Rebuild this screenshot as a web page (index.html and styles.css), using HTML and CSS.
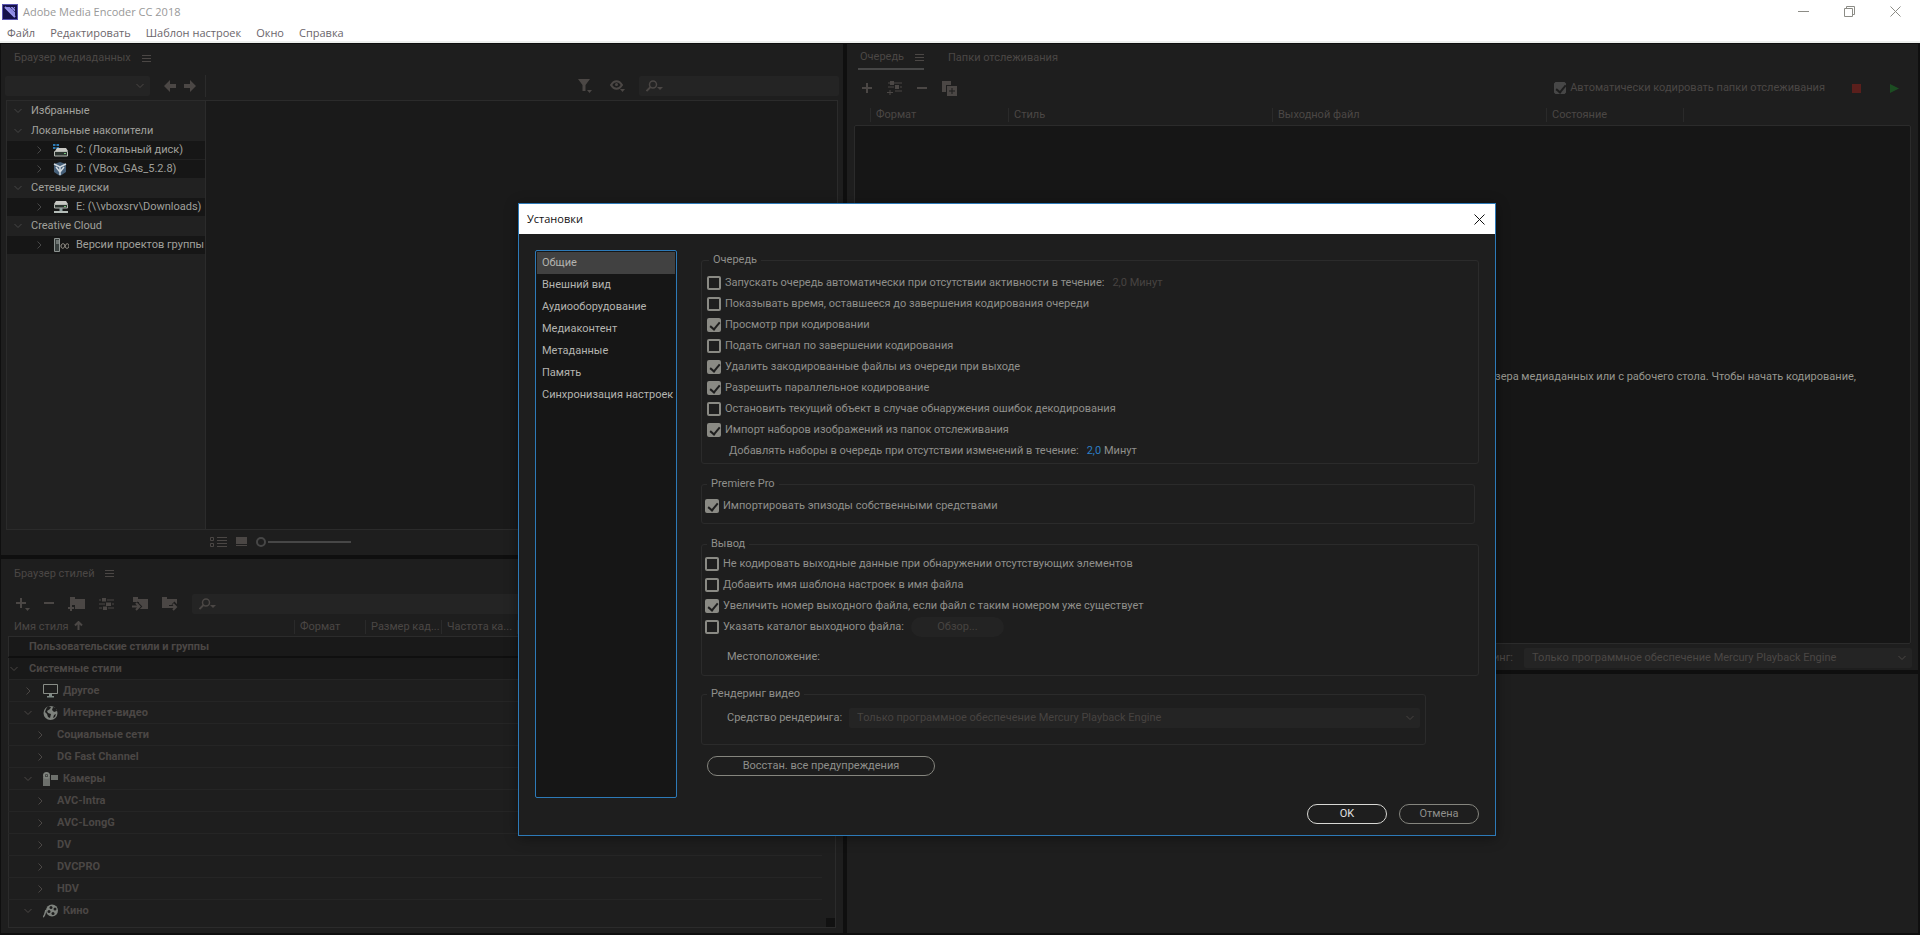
FILE: index.html
```html
<!DOCTYPE html>
<html lang="ru">

<head>
  <meta charset="UTF-8">
  <title>Adobe Media Encoder CC 2018</title>
  <link rel="stylesheet" href="styles.css">
</head>

<body>
  <svg class="sprite" aria-hidden="true">
    <symbol id="menu" viewBox="0 0 9 9"><path d="M0 1.500h9M0 4.500h9M0 7.500h9" stroke="currentColor" /></symbol>
    <symbol id="down" viewBox="0 0 8 8"><path d="M.5 2l3.500 3.500L7.500 2" fill="none" stroke="currentColor" /></symbol>
    <symbol id="right" viewBox="0 0 8 8"><path d="M2.500.5L6 4 2.500 7.500" fill="none" stroke="currentColor" /></symbol>
    <symbol id="close" viewBox="0 0 11 11"><path d="M.5.5l10 10M10.500.5l-10 10" fill="none" stroke="currentColor" /></symbol>
    <symbol id="arrow" viewBox="0 0 12 12"><path d="M0 6l6-6v4h6v4H6v4z" fill="currentColor" /></symbol>
    <symbol id="search" viewBox="0 0 18 12"><circle cx="7" cy="4.500" r="3.500" fill="none" stroke="currentColor" stroke-width="1.500" /><path d="M4.500 7L.5 11" stroke="currentColor" stroke-width="1.800" /><path d="M11 7h6l-3 3z" fill="currentColor" /></symbol>
    <symbol id="minus" viewBox="0 0 10 10"><path d="M0 5h10" stroke="currentColor" stroke-width="2" /></symbol>
    <symbol id="plus" viewBox="0 0 10 10"><path d="M0 5h10M5 0v10" stroke="currentColor" stroke-width="2" /></symbol>
    <symbol id="sliders" viewBox="0 0 15 12"><path d="M0 2h2M8 2h7M0 6h6M13 6h2M0 10h3M9 10h6" stroke="currentColor" /><path d="M3 0h4v3.500H3zM7 4.500h5V8H7zM4 8.500h4V12H4z" fill="currentColor" /></symbol>
  </svg>

  <header class="titlebar">
    <svg class="logo" viewBox="0 0 16 16">
      <rect x=".5" y=".5" width="15" height="15" fill="#16124a" stroke="#5a55b0" />
      <path d="M4 3h9v9z" fill="#8c88e0" />
      <path d="M3 3l10 10" stroke="#9a96ee" stroke-width="2" />
      <path d="M8 3l5 5M11 3l2 2" stroke="#16124a" stroke-dasharray="1 1" />
    </svg>
    <span>Adobe Media Encoder CC 2018</span>
    <div class="window-buttons">
      <button aria-label="Свернуть"><svg width="11" height="11" viewBox="0 0 11 11"><path d="M0 5.500h11" stroke="currentColor" /></svg></button>
      <button aria-label="Восстановить"><svg width="11" height="11" viewBox="0 0 11 11"><path d="M.5 2.500h8v8h-8zM2.500 2.500v-2h8v8h-2" fill="none" stroke="currentColor" /></svg></button>
      <button aria-label="Закрыть"><svg width="11" height="11"><use href="#close" /></svg></button>
    </div>
  </header>
  <nav class="menubar">
    <a href="#">Файл</a>
    <a href="#">Редактировать</a>
    <a href="#">Шаблон настроек</a>
    <a href="#">Окно</a>
    <a href="#">Справка</a>
  </nav>

  <main class="workspace">
    <div class="column column-left">
      <section class="panel media">
        <div class="tabs">
          <span>Браузер медиаданных</span>
          <svg width="9" height="9"><use href="#menu" /></svg>
        </div>
        <div class="media-bar">
          <div class="select path">
            <select aria-label="Путь"><option></option></select>
            <svg width="8" height="8"><use href="#down" /></svg>
          </div>
          <button class="back" aria-label="Назад"><svg width="12" height="12"><use href="#arrow" /></svg></button>
          <button class="forward" aria-label="Вперед"><svg width="12" height="12"><use href="#arrow" /></svg></button>
          <i class="separator"></i>
          <button class="filter" aria-label="Фильтр"><svg width="14" height="14" viewBox="0 0 14 14"><path d="M0 0h12L7.500 6v6h-3V6zM9 11h5l-2.500 3z" fill="currentColor" /></svg></button>
          <button class="eye" aria-label="Просмотр"><svg width="15" height="12" viewBox="0 0 15 12"><path d="M1 5c3-5 8-5 11 0-3 5-8 5-11 0z" fill="none" stroke="currentColor" stroke-width="2" /><circle cx="6.500" cy="4.500" r="1.500" fill="currentColor" /><path d="M10 9h5l-2.500 3z" fill="currentColor" /></svg></button>
          <label class="search">
            <svg width="18" height="12"><use href="#search" /></svg>
            <input type="text" aria-label="Поиск">
          </label>
        </div>
        <div class="media-body">
          <ul class="drives">
            <li class="group"><svg width="8" height="8"><use href="#down" /></svg>Избранные</li>
            <li class="group"><svg width="8" height="8"><use href="#down" /></svg>Локальные накопители</li>
            <li class="drive"><svg width="8" height="8"><use href="#right" /></svg>
              <svg class="drive-icon" viewBox="0 0 16 14"><path d="M0 1h2.500v2H0zM3.500 1H6v2H3.500zM0 4h2.500v2H0zM3.500 4H6v2H3.500z" fill="#2c7bb5" /><path d="M4 5h9l2 3H2z" fill="#c8c8c4" /><path d="M1.500 8.500h13V13h-13z" fill="#2b332f" stroke="#b4b8b2" /><path d="M11 10.500h2" stroke="#77c47b" /></svg>C: (Локальный диск)</li>
            <li class="drive"><svg width="8" height="8"><use href="#right" /></svg>
              <svg class="drive-icon" viewBox="0 0 16 14"><path d="M1 2l6-2 6 2v8l-6 4-6-4z" fill="#46607a" /><path d="M1 2l6 3 6-3M7 5v8M3 5l4 5 4-5" fill="none" stroke="#d3dae0" stroke-width="1.500" /></svg>D: (VBox_GAs_5.2.8)</li>
            <li class="group"><svg width="8" height="8"><use href="#down" /></svg>Сетевые диски</li>
            <li class="drive"><svg width="8" height="8"><use href="#right" /></svg>
              <svg class="drive-icon" viewBox="0 0 16 14"><path d="M3 1h10l2 3H1z" fill="#c8c8c4" /><path d="M1.500 4.500h13V8h-13z" fill="#2b332f" stroke="#b4b8b2" /><path d="M11 6.500h2" stroke="#77c47b" /><path d="M8 8v4" stroke="#8fa0a0" stroke-width="3" /><path d="M1 12h14" stroke="#b4bcb8" stroke-width="2" /></svg>E: (\\vboxsrv\Downloads)</li>
            <li class="group"><svg width="8" height="8"><use href="#down" /></svg>Creative Cloud</li>
            <li class="drive"><svg width="8" height="8"><use href="#right" /></svg>
              <svg class="drive-icon" viewBox="0 0 16 14"><path d="M1.500.5h5v13h-5z" fill="#39403f" stroke="#8d9391" /><path d="M3 3h3M3 5h3" stroke="#a8aeac" /><path d="M8 8c0-3 4-3 4 0s4 3 4 0-3-3-4 0-4 3-4 0z" fill="none" stroke="#9a958c" /></svg>Версии проектов группы</li>
          </ul>
        </div>
        <div class="media-foot">
          <svg width="17" height="12" viewBox="0 0 17 12"><path d="M.5 1.500h3v3h-3zM.5 7.500h3v3h-3zM7 1.500h10M7 4.500h10M7 7.500h10M7 10.500h10" fill="none" stroke="currentColor" /></svg>
          <svg width="11" height="12" viewBox="0 0 11 12"><path d="M0 1h11v7H0zM0 9h11v1H0z" fill="currentColor" /></svg>
          <input type="range" min="0" max="100" value="0" aria-label="Масштаб">
        </div>
      </section>

      <section class="panel presets">
        <div class="tabs">
          <span>Браузер стилей</span>
          <svg width="9" height="9"><use href="#menu" /></svg>
        </div>
        <div class="presets-bar">
          <button aria-label="Создать стиль"><svg width="14" height="14" viewBox="0 0 14 14"><path d="M0 6h10M5 1v10" stroke="currentColor" stroke-width="2" /><path d="M9 11h5l-2.500 3z" fill="currentColor" /></svg></button>
          <button aria-label="Удалить стиль"><svg width="10" height="14" viewBox="0 0 10 14"><path d="M0 6h10" stroke="currentColor" stroke-width="2" /></svg></button>
          <button aria-label="Создать группу"><svg width="17" height="14" viewBox="0 0 17 14"><path d="M2 0h5v2h10v10H7V8H2z" fill="currentColor" /><path d="M0 11h6M3 8v6" stroke="currentColor" stroke-width="2" /></svg></button>
          <button aria-label="Настройки стиля"><svg width="15" height="12"><use href="#sliders" /></svg></button>
          <button class="import" aria-label="Импорт"><svg width="16" height="14" viewBox="0 0 16 14"><path d="M1 0h5v2h10v10H7V5H1z" fill="currentColor" /><path d="M0 9.500h7M4 6l3.500 3.500L4 13" fill="none" stroke="#1e1e1e" stroke-width="4" /><path d="M0 9.500h7M4 6l3.500 3.500L4 13" fill="none" stroke="currentColor" stroke-width="2" /></svg></button>
          <button aria-label="Экспорт"><svg width="16" height="14" viewBox="0 0 16 14"><path d="M0 0h5v2h10v9H0z" fill="currentColor" /><path d="M7 10h7M11 6l4 4-4 4" fill="none" stroke="#1e1e1e" stroke-width="4" /><path d="M7 10h7M11 7l3 3-3 3" fill="none" stroke="currentColor" stroke-width="2" /></svg></button>
          <label class="search">
            <svg width="18" height="12"><use href="#search" /></svg>
            <input type="text" aria-label="Поиск стилей">
          </label>
        </div>
        <table class="presets-table">
          <colgroup><col class="c-name"><col class="c-format"><col class="c-size"><col class="c-rate"><col><col class="c-scroll"></colgroup>
          <thead>
            <tr>
              <th>Имя стиля <svg width="9" height="9" viewBox="0 0 9 9"><path d="M4.500 9V1M1 4.500L4.500 1 8 4.500" fill="none" stroke="currentColor" stroke-width="2" /></svg></th>
              <th><span>Формат</span></th>
              <th><span>Размер кад...</span></th>
              <th><span>Частота ка...</span></th>
              <th><span></span></th>
              <th></th>
            </tr>
          </thead>
          <tbody>
            <tr class="root first"><td colspan="5"><div class="lvl-0"><i></i>Пользовательские стили и группы</div></td><td></td></tr>
            <tr class="root"><td colspan="5"><div class="lvl-0"><svg width="8" height="8"><use href="#down" /></svg>Системные стили</div></td><td></td></tr>
            <tr><td colspan="5"><div class="lvl-1"><svg width="8" height="8"><use href="#right" /></svg>
              <svg class="kind" viewBox="0 0 15 14"><path d="M.5.5h14v9H.5z" fill="none" stroke="#898d87" /><path d="M6 10h3v2h2v1.500H4V12h2z" fill="#7f8a86" /></svg>Другое</div></td><td></td></tr>
            <tr><td colspan="5"><div class="lvl-1"><svg width="8" height="8"><use href="#down" /></svg>
              <svg class="kind" viewBox="0 0 15 14"><circle cx="7.500" cy="7" r="7" fill="#7e827d" /><path d="M5 0l3 1-1 2-3 2 1 2 3 1-1 4-2-1-1-3-2-2 1-3M10 1l-1 3 2 2 3-1-1-3zM11 9l2-1-1 3-2 1z" fill="#1e1e1e" /></svg>Интернет-видео</div></td><td></td></tr>
            <tr><td colspan="5"><div class="lvl-2"><svg width="8" height="8"><use href="#right" /></svg>Социальные сети</div></td><td></td></tr>
            <tr><td colspan="5"><div class="lvl-2"><svg width="8" height="8"><use href="#right" /></svg>DG Fast Channel</div></td><td></td></tr>
            <tr><td colspan="5"><div class="lvl-1"><svg width="8" height="8"><use href="#down" /></svg>
              <svg class="kind" viewBox="0 0 15 14"><path d="M0 5h7v9H0zM8 3h7v5H8z" fill="#6d706c" /><circle cx="3.500" cy="3.500" r="2.500" fill="#1e1e1e" stroke="#7e827d" stroke-width="2" /><circle cx="3.500" cy="3.500" r="1" fill="#7e827d" /></svg>Камеры</div></td><td></td></tr>
            <tr><td colspan="5"><div class="lvl-2"><svg width="8" height="8"><use href="#right" /></svg>AVC-Intra</div></td><td></td></tr>
            <tr><td colspan="5"><div class="lvl-2"><svg width="8" height="8"><use href="#right" /></svg>AVC-LongG</div></td><td></td></tr>
            <tr><td colspan="5"><div class="lvl-2"><svg width="8" height="8"><use href="#right" /></svg>DV</div></td><td></td></tr>
            <tr><td colspan="5"><div class="lvl-2"><svg width="8" height="8"><use href="#right" /></svg>DVCPRO</div></td><td></td></tr>
            <tr><td colspan="5"><div class="lvl-2"><svg width="8" height="8"><use href="#right" /></svg>HDV</div></td><td></td></tr>
            <tr class="last"><td colspan="5"><div class="lvl-1"><svg width="8" height="8"><use href="#down" /></svg>
              <svg class="kind" viewBox="0 0 15 14"><circle cx="9" cy="6.500" r="6" fill="#7e827d" /><path d="M0 13c2-1 2-4 3-7" fill="none" stroke="#7e827d" stroke-width="1.500" /><circle cx="8" cy="3.500" r="1.500" fill="#1e1e1e" /><circle cx="12" cy="5" r="1.500" fill="#1e1e1e" /><circle cx="6" cy="7.500" r="1.500" fill="#1e1e1e" /><circle cx="10" cy="9.500" r="1.500" fill="#1e1e1e" /></svg>Кино</div></td><td class="grip"></td></tr>
          </tbody>
        </table>
      </section>
    </div>

    <div class="column column-right">
      <section class="panel queue">
        <div class="tabs">
          <span class="tab-active">Очередь <svg width="9" height="9"><use href="#menu" /></svg></span>
          <span>Папки отслеживания</span>
        </div>
        <div class="queue-bar">
          <button aria-label="Добавить источник"><svg width="10" height="10"><use href="#plus" /></svg></button>
          <button aria-label="Добавить вывод"><svg width="15" height="15" viewBox="0 0 15 15"><path d="M1 2h2M7 2h8M1 6h6M13 6h2M8 10h7M0 11.500h6M3 9v5" stroke="currentColor" /><path d="M3 0h4v4H3zM8 4h4v4H8z" fill="currentColor" /></svg></button>
          <button aria-label="Удалить"><svg width="10" height="10"><use href="#minus" /></svg></button>
          <button aria-label="Дублировать"><svg width="15" height="15" viewBox="0 0 15 15"><path d="M0 0h9v4H4v7H0zM5 5h10v10H5z" fill="currentColor" /><path d="M7 10h6M10 7v6" stroke="#1e1e1e" /></svg></button>
          <label class="auto"><input type="checkbox" class="check check-dim" checked>Автоматически кодировать папки отслеживания</label>
          <button class="stop" aria-label="Остановить"></button>
          <button class="play" aria-label="Начать"><svg width="9" height="9" viewBox="0 0 9 9"><path d="M0 0l9 4.500L0 9z" fill="#1c4d22" /></svg></button>
        </div>
        <table class="queue-head">
          <colgroup><col class="q-arrow"><col class="q-format"><col class="q-style"><col class="q-file"><col class="q-state"><col></colgroup>
          <thead>
            <tr><th></th><th><span>Формат</span></th><th><span>Стиль</span></th><th><span>Выходной файл</span></th><th><span>Состояние</span></th><th><span></span></th></tr>
          </thead>
        </table>
        <div class="queue-body">
          <p>из браузера медиаданных или с рабочего стола. Чтобы начать кодирование,</p>
        </div>
        <div class="queue-foot">
          <label for="engine">Рендеринг:</label>
          <div class="select">
            <select id="engine"><option>Только программное обеспечение Mercury Playback Engine</option></select>
            <svg width="8" height="8"><use href="#down" /></svg>
          </div>
        </div>
      </section>
      <section class="panel encoding"></section>
    </div>
  </main>

  <div class="dialog" role="dialog" aria-labelledby="dialog-title">
    <div class="dialog-title">
      <span id="dialog-title">Установки</span>
      <button aria-label="Закрыть"><svg width="11" height="11"><use href="#close" /></svg></button>
    </div>
    <div class="dialog-main">
      <nav class="categories">
        <a href="#" class="selected">Общие</a>
        <a href="#">Внешний вид</a>
        <a href="#">Аудиооборудование</a>
        <a href="#">Медиаконтент</a>
        <a href="#">Метаданные</a>
        <a href="#">Память</a>
        <a href="#">Синхронизация настроек</a>
      </nav>
      <form class="settings">
        <fieldset class="box-queue">
          <legend>Очередь</legend>
          <div class="row">
            <label><input type="checkbox" class="check">Запускать очередь автоматически при отсутствии активности в течение:</label>
            <span class="minutes off"><b>2,0</b> Минут</span>
          </div>
          <div class="row"><label><input type="checkbox" class="check">Показывать время, оставшееся до завершения кодирования очереди</label></div>
          <div class="row"><label><input type="checkbox" class="check" checked>Просмотр при кодировании</label></div>
          <div class="row"><label><input type="checkbox" class="check">Подать сигнал по завершении кодирования</label></div>
          <div class="row"><label><input type="checkbox" class="check" checked>Удалить закодированные файлы из очереди при выходе</label></div>
          <div class="row"><label><input type="checkbox" class="check" checked>Разрешить параллельное кодирование</label></div>
          <div class="row"><label><input type="checkbox" class="check">Остановить текущий объект в случае обнаружения ошибок декодирования</label></div>
          <div class="row"><label><input type="checkbox" class="check" checked>Импорт наборов изображений из папок отслеживания</label></div>
          <div class="row indent">
            <span>Добавлять наборы в очередь при отсутствии изменений в течение:</span>
            <span class="minutes on"><b>2,0</b> Минут</span>
          </div>
        </fieldset>

        <fieldset class="box-premiere">
          <legend>Premiere Pro</legend>
          <div class="row"><label><input type="checkbox" class="check" checked>Импортировать эпизоды собственными средствами</label></div>
        </fieldset>

        <fieldset class="box-output">
          <legend>Вывод</legend>
          <div class="row"><label><input type="checkbox" class="check">Не кодировать выходные данные при обнаружении отсутствующих элементов</label></div>
          <div class="row"><label><input type="checkbox" class="check">Добавить имя шаблона настроек в имя файла</label></div>
          <div class="row"><label><input type="checkbox" class="check" checked>Увеличить номер выходного файла, если файл с таким номером уже существует</label></div>
          <div class="row">
            <label><input type="checkbox" class="check">Указать каталог выходного файла:</label>
            <button type="button" class="browse" disabled>Обзор...</button>
          </div>
          <div class="row indent location">Местоположение:</div>
        </fieldset>

        <fieldset class="box-render">
          <legend>Рендеринг видео</legend>
          <div class="row indent">
            <label for="renderer">Средство рендеринга:</label>
            <div class="select">
              <select id="renderer" disabled><option>Только программное обеспечение Mercury Playback Engine</option></select>
              <svg width="8" height="8"><use href="#down" /></svg>
            </div>
          </div>
        </fieldset>

        <button type="button" class="pill reset">Восстан. все предупреждения</button>
      </form>
    </div>
    <div class="dialog-actions">
      <button class="pill ok">OK</button>
      <button class="pill">Отмена</button>
    </div>
  </div>
</body>

</html>
```
FILE: styles.css
```css
* {
  box-sizing: border-box;
}

body {
  display: flex;
  flex-direction: column;
  min-height: 100vh;
  margin: 0;
  position: relative;
  background-color: #0f0f0f;
  color: #4b4745;
  font-family: Roboto, "Noto Sans", sans-serif;
  font-size: 11px;
  line-height: 16px;
}

button,
input,
select {
  font: inherit;
  color: inherit;
  margin: 0;
  padding: 0;
  border: 0;
  background: none;
}

button {
  display: flex;
  align-items: center;
  justify-content: center;
}

a {
  color: inherit;
  text-decoration: none;
}

svg {
  flex: none;
}

.sprite {
  position: absolute;
  width: 0;
  height: 0;
}

/* Window chrome */
.titlebar {
  display: flex;
  align-items: center;
  gap: 5px;
  height: 23px;
  padding: 0 2px;
  background-color: #fff;
  color: #999;
  font-family: "Open Sans", sans-serif;
}

.logo {
  width: 16px;
  height: 16px;
}

.window-buttons {
  display: flex;
  margin-left: auto;
}

.window-buttons button {
  width: 46px;
  height: 20px;
  color: #8c8c86;
}

.menubar {
  display: flex;
  gap: 15px;
  height: 20px;
  padding-left: 7px;
  background-color: #fff;
  border-bottom: 2px solid #eef0ee;
  color: #6b666b;
  line-height: 20px;
  font-family: "Open Sans", sans-serif;
}

.workspace {
  flex: 1;
  display: grid;
  grid-template-columns: 842fr 1071fr;
  gap: 4px;
  padding: 1px 2px 2px 1px;
}

.column {
  display: grid;
  gap: 4px;
  min-width: 0;
}

.column-left {
  grid-template-rows: auto 374px;
}

.column-right {
  grid-template-rows: auto 259px;
}

.panel {
  display: flex;
  flex-direction: column;
  min-width: 0;
  background-color: #1e1e1e;
}

.tabs {
  display: flex;
  align-items: center;
  gap: 11px;
  height: 28px;
  padding-left: 13px;
}

.search {
  display: flex;
  align-items: center;
  height: 20px;
  padding-left: 7px;
  border-radius: 2px;
  background-color: #242424;
}

.search input {
  flex: 1;
  min-width: 0;
  margin-left: 8px;
}

.select {
  position: relative;
  flex: 1;
  min-width: 0;
  height: 20px;
  border-radius: 2px;
  background-color: #242424;
}

.select select {
  width: 100%;
  height: 20px;
  padding-left: 8px;
  appearance: none;
  opacity: 1;
}

.select svg {
  position: absolute;
  right: 6px;
  top: 6px;
  pointer-events: none;
}

/* Media browser */
.media-bar {
  display: flex;
  align-items: center;
  height: 22px;
  margin: 3px 4px 3px 4px;
}

.path {
  flex: 0 0 145px;
}

.back {
  margin-left: 14px;
}

.forward {
  margin-left: 8px;
}

.forward svg {
  transform: scaleX(-1);
}

.separator {
  width: 1px;
  height: 22px;
  margin-left: 9px;
  background-color: #2b2b2b;
}

.filter {
  margin-left: auto;
}

.eye {
  margin: 0 14px 0 18px;
}

.media-bar .search {
  width: 200px;
}

.media-body {
  flex: 1;
  display: flex;
  margin: 0 5px;
  border: 1px solid #2b2b2b;
  background-color: #1a1a1a;
}

.drives {
  width: 199px;
  margin: 0;
  padding: 0;
  list-style: none;
  border-right: 1px solid #2b2b2b;
  background-color: #212121;
  color: #a0a09c;
  white-space: nowrap;
}

.drives li {
  display: flex;
  align-items: center;
}

.drives use {
  color: #474747;
}

.group {
  height: 20px;
  gap: 9px;
  padding-left: 7px;
}

.drive {
  height: 18px;
  gap: 7px;
  padding-left: 28px;
  background-color: #161616;
}

.drive + .drive {
  height: 19px;
  border-top: 1px solid #212121;
}

.drive-icon {
  width: 16px;
  height: 14px;
  margin-left: 3px;
}

.media-foot {
  display: flex;
  align-items: center;
  gap: 9px;
  height: 25px;
  padding: 0 0 2px 209px;
}

.media-foot input {
  width: 95px;
  height: 12px;
  appearance: none;
  background: linear-gradient(#474747, #474747) 12px center / 83px 2px no-repeat;
}

.media-foot input::-webkit-slider-thumb {
  appearance: none;
  width: 10px;
  height: 10px;
  border: 2px solid #474747;
  border-radius: 50%;
}

/* Preset browser */
.presets .tabs {
  height: 29px;
}

.presets-bar {
  display: flex;
  align-items: center;
  gap: 14px;
  height: 32px;
  padding: 0 4px 0 15px;
}

.presets-bar .import {
  margin-left: 4px;
}

.presets-bar .search {
  flex: 1;
}

table {
  border-spacing: 0;
  table-layout: fixed;
}

th {
  height: 18px;
  padding: 0;
  font-weight: normal;
  text-align: left;
  white-space: nowrap;
}

th span {
  display: block;
  height: 14px;
  padding-left: 5px;
  border-left: 1px solid #2a2a2a;
  line-height: 14px;
}

.presets-table {
  width: calc(100% - 14px);
  margin: -2px 7px 0;
}

.presets-table th:first-child {
  padding-left: 6px;
}

.presets-table th svg {
  margin-left: 3px;
}

.c-name { width: 286px; }
.c-format { width: 71px; }
.c-size { width: 76px; }
.c-rate { width: 76px; }
.c-scroll { width: 14px; }

.presets-table td {
  height: 22px;
  padding: 0;
  font-weight: bold;
}

.presets-table td:first-child {
  border-left: 1px solid #2b2b2b;
  border-bottom: 1px solid #252525;
}

.presets-table td:last-child {
  border-right: 1px solid #2b2b2b;
}

.presets-table .root td {
  background-color: #191919;
}

.presets-table .first td {
  border-top: 1px solid #2b2b2b;
  border-bottom: 2px solid #0f0f0f;
}

.presets-table .last td {
  height: 28px;
  padding-bottom: 6px;
  border-bottom: 1px solid #2b2b2b;
}

.presets-table .grip {
  background: linear-gradient(#111, #111) right bottom / 9px 9px no-repeat;
}

.presets-table td div {
  display: flex;
  align-items: center;
}

.lvl-0 {
  gap: 11px;
  padding-left: 1px;
}

.lvl-0 i {
  width: 8px;
}

.lvl-1 {
  gap: 5px;
  padding-left: 15px;
}

.lvl-2 {
  gap: 13px;
  padding-left: 27px;
}

.kind {
  width: 15px;
  height: 14px;
  margin-left: 6px;
}

/* Queue */
.queue .tabs {
  gap: 24px;
  padding-left: 11px;
}

.tab-active {
  display: flex;
  align-items: center;
  gap: 11px;
  height: 24px;
  padding-left: 2px;
  border-bottom: 2px solid #474747;
}

.queue-bar {
  display: flex;
  align-items: center;
  gap: 15px;
  height: 32px;
  padding: 0 19px 0 15px;
}

.auto {
  display: flex;
  align-items: center;
  gap: 4px;
  margin-left: auto;
}

.stop {
  width: 9px;
  height: 9px;
  margin: 0 14px 0 12px;
  background-color: #5a1f1c;
}

.queue-head {
  width: calc(100% - 14px);
  margin: 2px 7px 1px;
}

.q-arrow { width: 16px; }
.q-format { width: 138px; }
.q-style { width: 264px; }
.q-file { width: 274px; }
.q-state { width: 137px; }

.queue-body {
  flex: 1;
  display: flex;
  align-items: center;
  justify-content: flex-end;
  margin: 0 7px;
  padding-right: 54px;
  border: 1px solid #2b2b2b;
  border-radius: 2px;
  background-color: #161616;
  color: #96968f;
}

.queue-body p {
  margin: 0 0 16px;
}

.queue-foot {
  display: flex;
  align-items: center;
  justify-content: flex-end;
  gap: 11px;
  height: 26px;
  padding: 1px 6px 0 0;
}

.queue-foot .select {
  flex: 0 0 388px;
}

/* Checkboxes */
.check {
  position: relative;
  flex: none;
  width: 14px;
  height: 14px;
  appearance: none;
  border: 2px solid #8a8a84;
  border-radius: 2px;
}

.check:checked {
  background-color: #8a8a84;
}

.check:checked::before {
  content: "";
  position: absolute;
  left: 3px;
  top: 0;
  width: 4px;
  height: 8px;
  border: solid #1e1e1e;
  border-width: 0 2px 2px 0;
  transform: rotate(40deg);
}

.check-dim {
  width: 12px;
  height: 12px;
  border: 1px solid #474747;
}

.check-dim:checked {
  background-color: #474747;
}

/* Preferences dialog */
.dialog {
  position: absolute;
  left: 518px;
  top: 203px;
  width: 978px;
  border: 1px solid #2d7ab8;
  background-color: #1e1e1e;
  color: #8f8f8b;
  box-shadow: 0 2px 12px rgba(0, 0, 0, 0.4);
}

.dialog-title {
  display: flex;
  align-items: center;
  justify-content: space-between;
  height: 30px;
  padding: 0 10px 0 8px;
  background-color: #fff;
  color: #111;
  font-family: "Open Sans", sans-serif;
}

.dialog-main {
  display: flex;
  gap: 24px;
  padding: 16px 16px 0 16px;
}

.categories {
  width: 142px;
  height: 548px;
  padding: 1px;
  border: 1px solid #2d7ab8;
  border-radius: 2px;
  background-color: #161616;
  color: #b4b4b0;
}

.categories a {
  display: block;
  height: 22px;
  padding-left: 5px;
  line-height: 21px;
  white-space: nowrap;
}

.categories .selected {
  background-color: #414141;
}

.settings {
  flex: 1;
  min-width: 0;
  padding-top: 2px;
}

fieldset {
  min-width: 0;
  margin: 0 0 12px;
  padding: 4px 3px 0;
  border: 1px solid #2b2b2b;
  border-radius: 3px;
}

legend {
  margin-left: 2px;
  padding: 0 4px;
}

.row {
  display: flex;
  align-items: center;
  height: 21px;
  white-space: nowrap;
}

.row label {
  display: flex;
  align-items: center;
  gap: 4px;
}

.box-queue {
  height: 212px;
  padding-left: 5px;
}

.box-premiere {
  height: 48px;
  margin-right: 4px;
  padding-top: 3px;
}

.box-output {
  height: 140px;
  margin-bottom: 10px;
  padding-top: 1px;
}

.box-render {
  height: 59px;
  margin-right: 53px;
  margin-bottom: 11px;
  padding-top: 5px;
  padding-right: 5px;
}

.indent {
  padding-left: 22px;
}

.minutes {
  margin-left: 8px;
}

.minutes b {
  font-weight: normal;
}

.off {
  color: #474341;
}

.on b {
  color: #2d7fc4;
}

.browse {
  width: 93px;
  height: 20px;
  margin-left: 7px;
  border-radius: 10px;
  background-color: #232323;
  color: #474341;
}

.location {
  margin-top: 9px;
}

.box-render .select {
  margin-left: 7px;
  color: #474341;
}

.pill {
  width: 80px;
  height: 20px;
  border: 1px solid #85857e;
  border-radius: 10px;
}

.reset {
  width: 228px;
  margin-left: 6px;
}

.dialog-actions {
  display: flex;
  justify-content: flex-end;
  gap: 12px;
  padding: 6px 16px 11px;
}

.ok {
  border-color: #d8d8d4;
  color: #e0e0e0;
}
```
